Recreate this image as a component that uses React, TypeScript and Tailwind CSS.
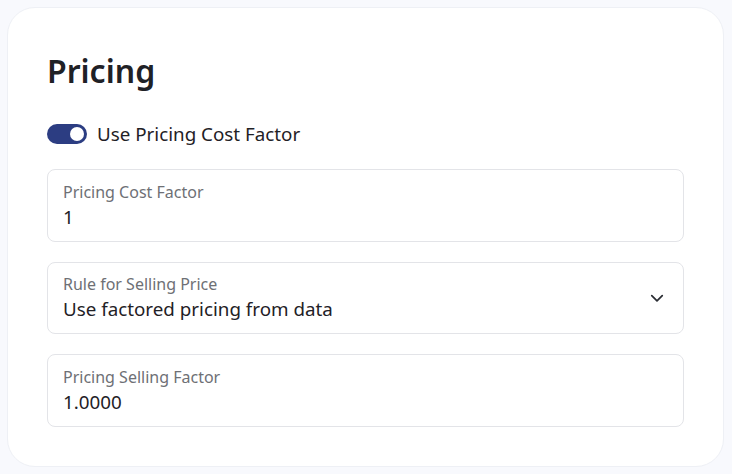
import React from "react";

function Field({ label, value, select }: { label: string; value: string; select?: boolean }) {
  return (
    <div className="flex h-[72.5px] items-center justify-between rounded-[8px] border border-[#e3e4e8] bg-white pl-[15px] pr-[19px]">
      <div className="flex flex-col">
        <span className="text-[16px] leading-[20px] text-[#6e7075]">{label}</span>
        <span className="mt-[3px] text-[18.8px] leading-[24px] text-[#1f2126]">{value}</span>
      </div>
      {select && (
        <svg width="14" height="14" viewBox="0 0 24 24" fill="none" stroke="#2a2d33" strokeWidth="3" strokeLinecap="round" strokeLinejoin="round">
          <path d="M3 8l9 9 9-9" />
        </svg>
      )}
    </div>
  );
}

export default function App() {
  return (
    <div
      className="min-h-[474px] w-[732px] bg-[#f8f9fd] p-[7px]"
      style={{ fontFamily: '"Noto Sans", "Open Sans", sans-serif' }}
    >
      <div className="h-[460px] w-[717px] rounded-[28px] border border-[#eef0f5] bg-white px-[39px] pt-[39px]">
        <h1 className="text-[32px] font-semibold leading-[48px] text-[#1f2126]">Pricing</h1>
        <div className="mt-[27px] flex items-center gap-[10px]">
          <div className="flex h-[20px] w-[40px] items-center justify-end rounded-full bg-[#2c3d82] pr-[3px]">
            <div className="h-[14px] w-[14px] rounded-full bg-white" />
          </div>
          <span className="text-[18.8px] leading-[24px] text-[#1f2126]">Use Pricing Cost Factor</span>
        </div>
        <div className="mt-[23px] flex flex-col gap-[20px]">
          <Field label="Pricing Cost Factor" value="1" />
          <Field label="Rule for Selling Price" value="Use factored pricing from data" select />
          <Field label="Pricing Selling Factor" value="1.0000" />
        </div>
      </div>
    </div>
  );
}
